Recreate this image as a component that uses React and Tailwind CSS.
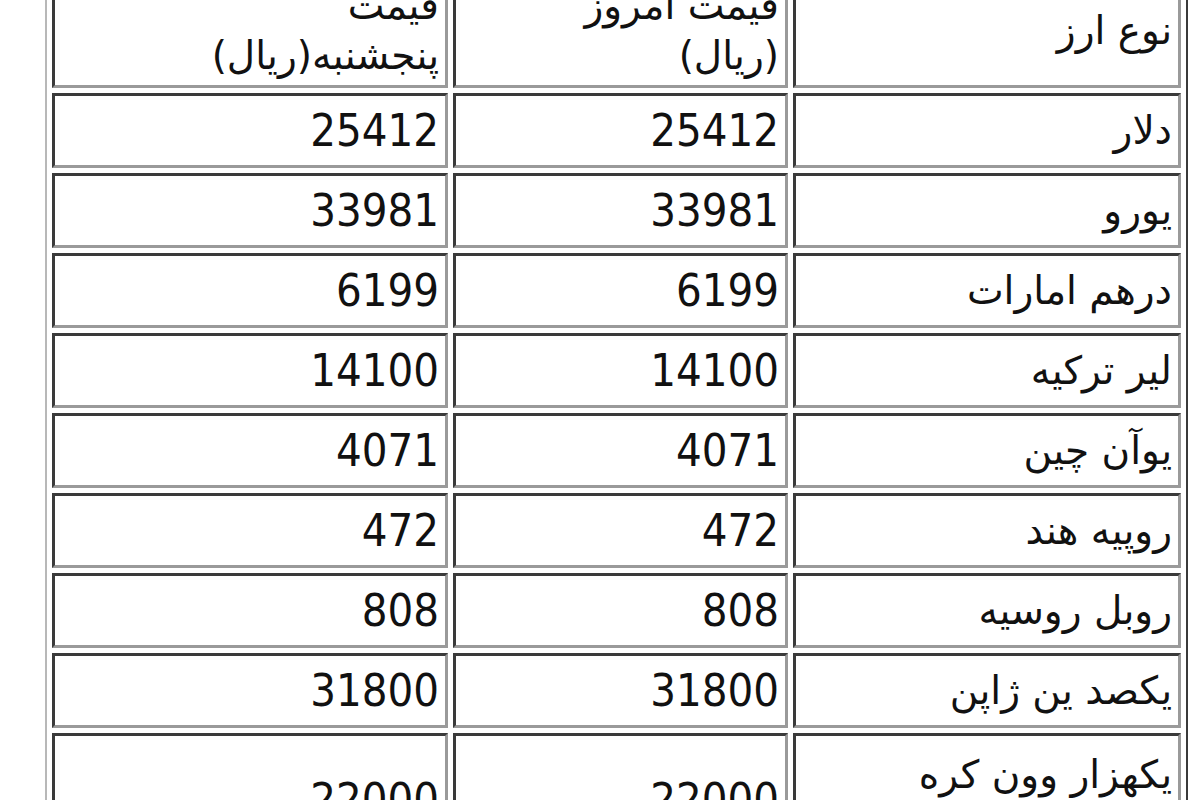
import React from "react";

const rows = [
  { name: "دلار", today: "25412", thu: "25412" },
  { name: "یورو", today: "33981", thu: "33981" },
  { name: "درهم امارات", today: "6199", thu: "6199" },
  { name: "لیر ترکیه", today: "14100", thu: "14100" },
  { name: "یوآن چین", today: "4071", thu: "4071" },
  { name: "روپیه هند", today: "472", thu: "472" },
  { name: "روبل روسیه", today: "808", thu: "808" },
  { name: "یکصد ین ژاپن", today: "31800", thu: "31800" },
];

const cell =
  "border-[3px] border-t-[#3a3a3a] border-l-[#3a3a3a] border-r-[#9a9a9a] border-b-[#9a9a9a] pr-[6px] pl-1 py-0 align-middle text-right";

const num = "font-['DejaVu_Sans_Condensed','DejaVu_Sans',sans-serif] text-[45px]";

export default function App() {
  return (
    <div className="bg-white w-[1200px] h-[800px] overflow-hidden" dir="rtl">
      <table className="table-fixed border-separate border-spacing-[5px] w-[1143px] mr-[12px] mt-[-34px] border-2 border-t-[#b8b8b8] border-l-[#b8b8b8] border-r-[#3a3a3a] border-b-[#3a3a3a] text-[#111]">
        <colgroup>
          <col className="w-[388px]" />
          <col className="w-[335px]" />
          <col className="w-[396px]" />
        </colgroup>
        <tbody className="font-['DejaVu_Sans',sans-serif] text-[39px] leading-[50px]">
          <tr>
            <td className={`${cell} h-[115px]`}>نوع ارز</td>
            <td className={`${cell} h-[115px]`}>
              قیمت امروز
              <br />
              (ریال)
            </td>
            <td className={`${cell} h-[115px]`}>
              قیمت
              <br />
              پنجشنبه(ریال)
            </td>
          </tr>
          {rows.map((r) => (
            <tr key={r.name}>
              <td className={`${cell} h-[75px]`}>{r.name}</td>
              <td className={`${cell} h-[75px] ${num}`}>{r.today}</td>
              <td className={`${cell} h-[75px] ${num}`}>{r.thu}</td>
            </tr>
          ))}
          <tr>
            <td className={`${cell} h-[134px]`}>
              یکهزار وون کره
              <br />
              جنوبی
            </td>
            <td className={`${cell} h-[134px] ${num}`}>22000</td>
            <td className={`${cell} h-[134px] ${num}`}>22000</td>
          </tr>
        </tbody>
      </table>
    </div>
  );
}
